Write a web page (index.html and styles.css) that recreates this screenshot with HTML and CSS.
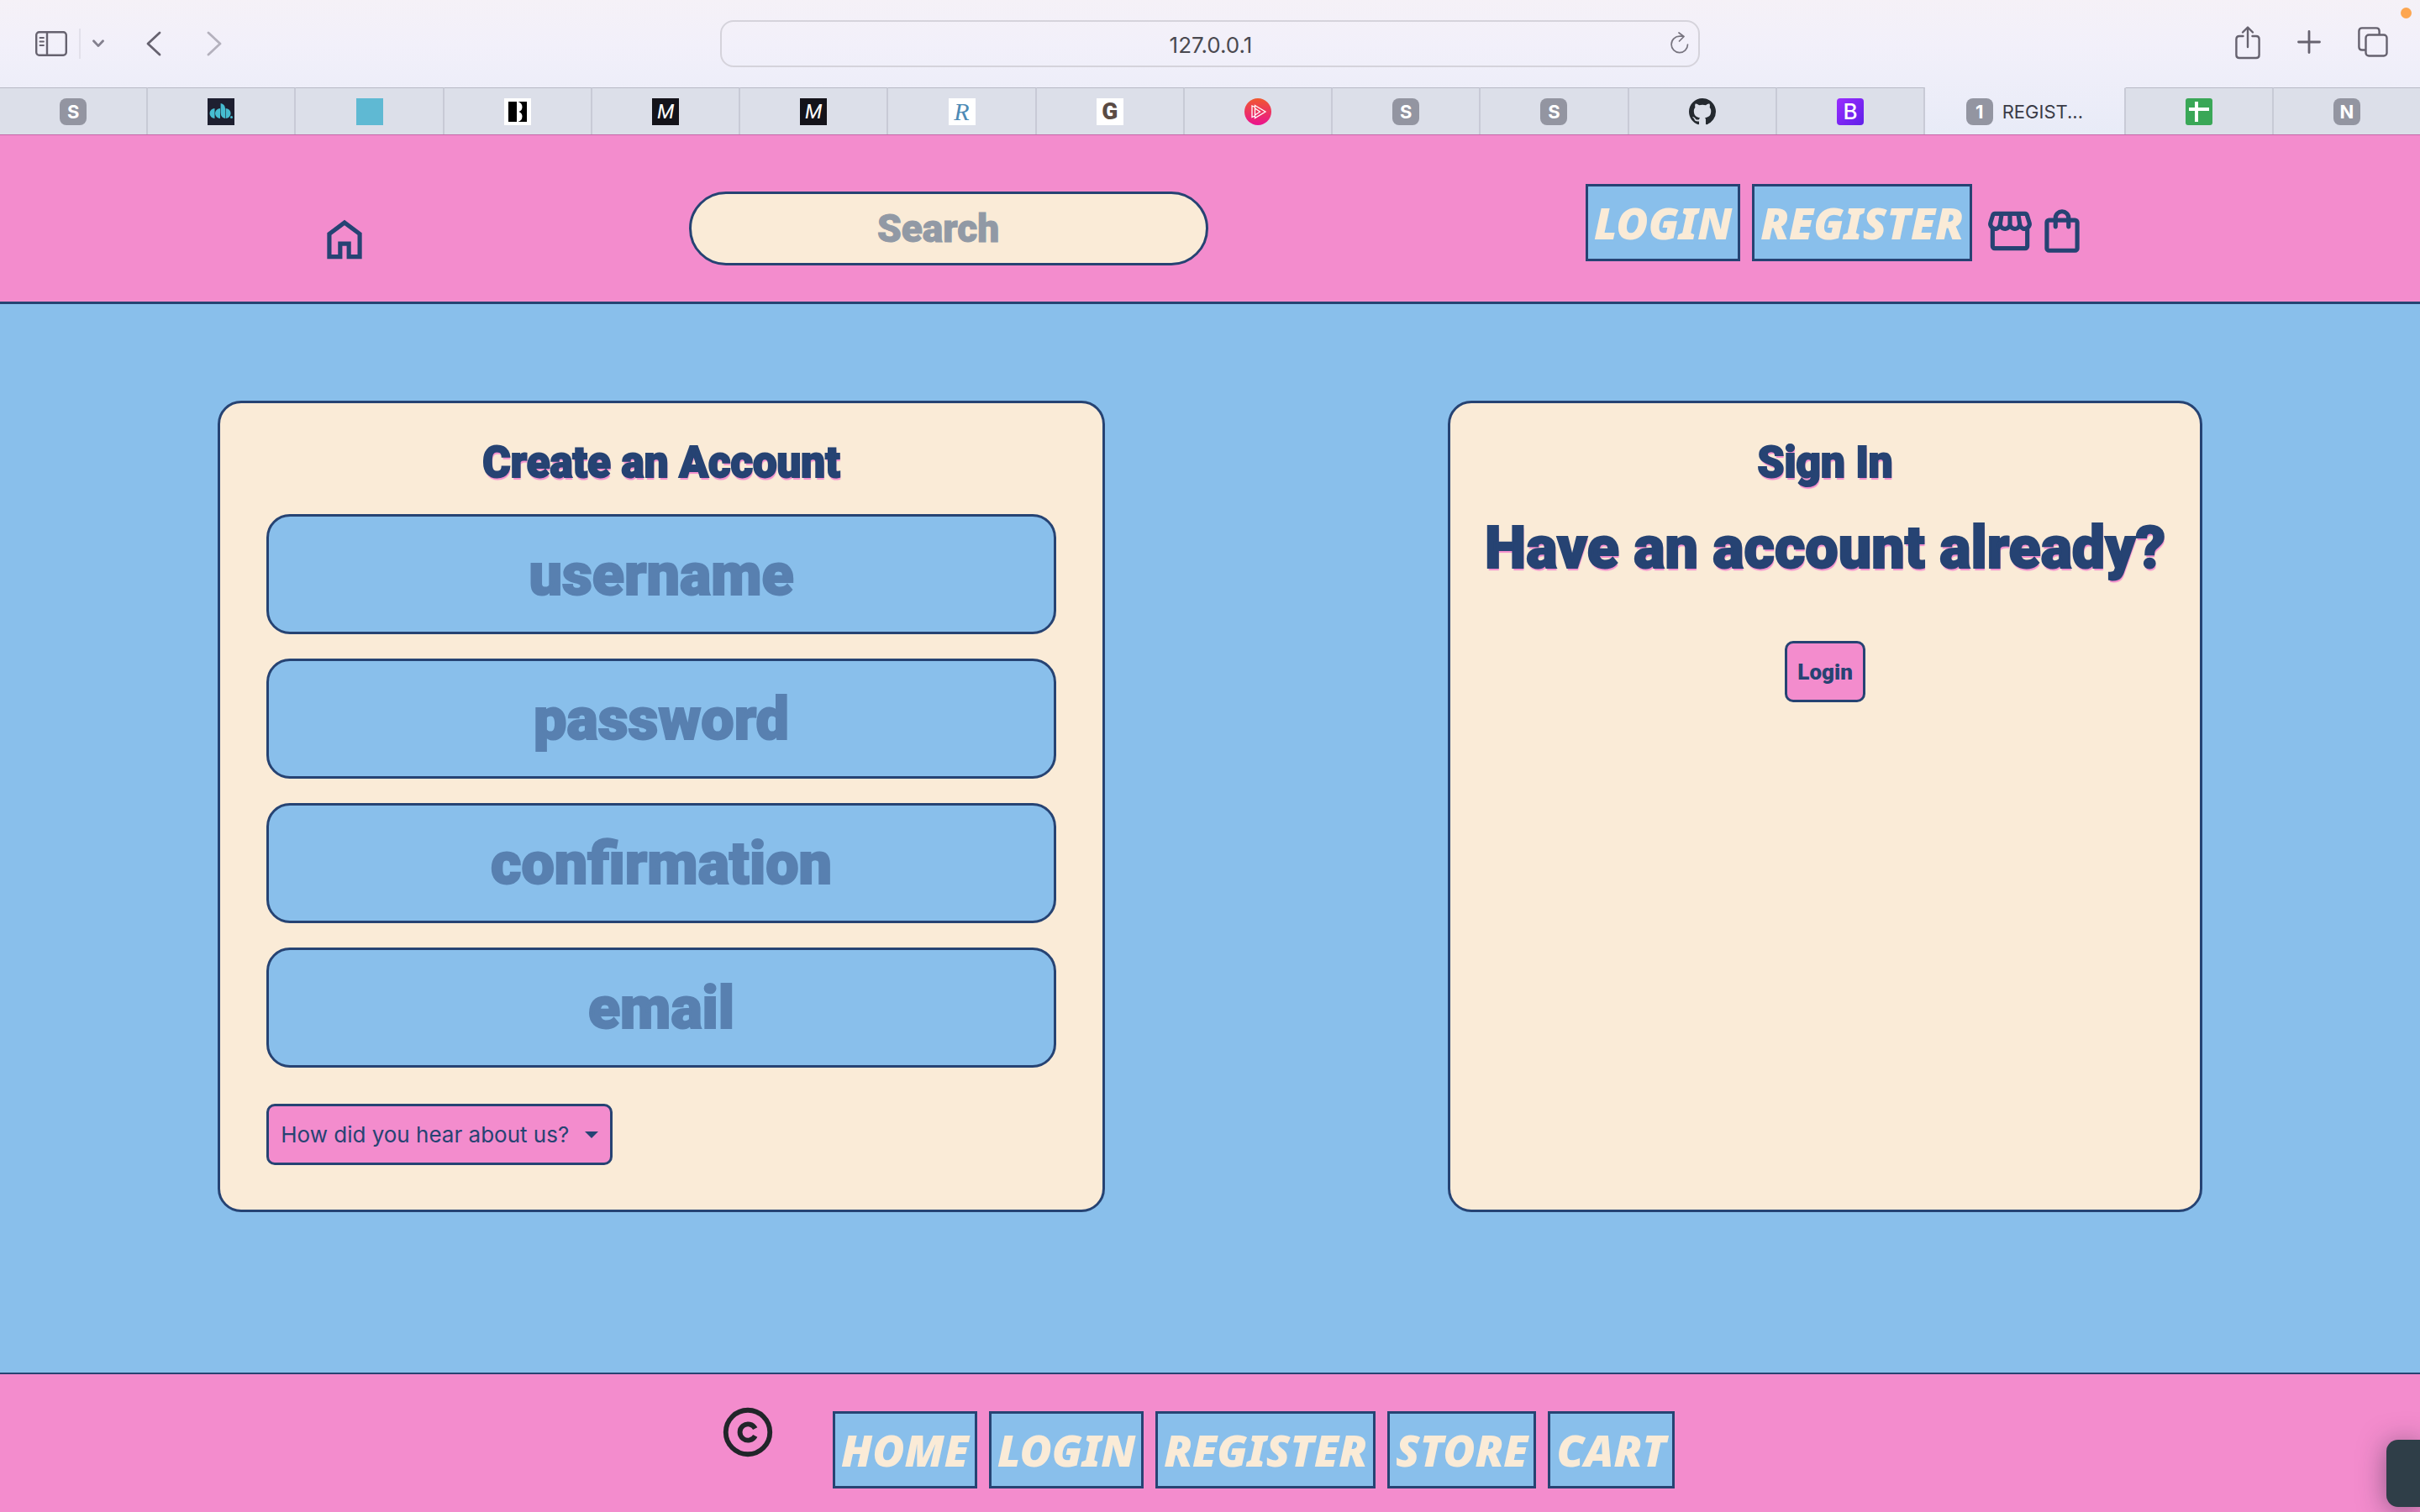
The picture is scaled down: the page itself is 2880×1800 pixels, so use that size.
FILE: index.html
```html
<!DOCTYPE html>
<html lang="en">
<head>
<meta charset="utf-8">
<meta name="viewport" content="width=device-width, initial-scale=1">
<title>REGISTER</title>
<link rel="stylesheet" href="styles.css">
</head>
<body>
<div class="browser">
  <div class="toolbar">
    <div class="toolbar-left">
      <button class="tool" aria-label="Sidebar"><svg width="38" height="30" viewBox="0 0 38 30" fill="none" stroke="currentColor"><rect x="1.2" y="1.2" width="35.6" height="27.6" rx="3.5" stroke-width="2.4"/><path d="M14 1v28" stroke-width="2.4"/><path d="M5.5 8h4.500M5.500 12.500h4.500M5.500 17h4.500" stroke-width="1.8" stroke-linecap="round"/></svg></button>
      <span class="divider"></span>
      <button class="tool muted" aria-label="Tab groups"><svg width="14" height="10" viewBox="0 0 14 10" fill="none" stroke="currentColor" stroke-width="2.8" stroke-linecap="round" stroke-linejoin="round"><path d="M1.500 1.800 7 7.600l5.500-5.800"/></svg></button>
      <button class="tool back" aria-label="Back"><svg width="18" height="30" viewBox="0 0 18 30" fill="none" stroke="currentColor" stroke-width="2.8" stroke-linecap="round" stroke-linejoin="round"><path d="M16 2 2 15l14 13"/></svg></button>
      <button class="tool forward" aria-label="Forward"><svg width="18" height="30" viewBox="0 0 18 30" fill="none" stroke="currentColor" stroke-width="2.8" stroke-linecap="round" stroke-linejoin="round"><path d="M2 2l14 13L2 28"/></svg></button>
    </div>
    <div class="address">
      <input class="address-input" type="text" aria-label="Address" value="127.0.0.1">
      <button class="reload" aria-label="Reload"><svg width="22" height="26" viewBox="0 0 22 26" fill="none" stroke="currentColor" stroke-width="1.700" stroke-linecap="round" stroke-linejoin="round"><path d="M20.500 15A9.700 9.700 0 1 1 11 5.200h4.500M10 1l6 4.500-5.500 5.500"/></svg></button>
    </div>
    <div class="toolbar-right">
      <button class="tool" aria-label="Share"><svg width="30" height="42" viewBox="0 0 30 42" fill="none" stroke="currentColor" stroke-width="2.400" stroke-linecap="round" stroke-linejoin="round"><path d="M9.500 14H5q-3.600 0-3.600 3.600v18.800Q1.400 40 5 40h20q3.600 0 3.600-3.600V17.600Q28.600 14 25 14h-4.500M15 27V4M9 9.500l6-6 6 6"/></svg></button>
      <button class="tool" aria-label="New tab"><svg width="28" height="28" viewBox="0 0 28 28" fill="none" stroke="currentColor" stroke-width="2.800" stroke-linecap="round"><path d="M14 1.500v25M1.500 14h25"/></svg></button>
      <button class="tool" aria-label="All tabs"><svg width="36" height="36" viewBox="0 0 36 36" fill="none" stroke="currentColor" stroke-width="2.400" stroke-linejoin="round"><rect x="9.500" y="9.500" width="25" height="25" rx="3.600"/><path d="M9 27.500H5q-3.600 0-3.600-3.600V5Q1.400 1.400 5 1.400h17q3.600 0 3.600 3.600v4"/></svg></button>
      <span class="dot"></span>
    </div>
  </div>
  <div class="tabs">
    <div class="tab"><span class="tile">S</span></div>
    <div class="tab"><svg class="favicon" viewBox="0 0 32 32"><rect width="32" height="32" fill="#1e1f30"/><g fill="#46bcd0"><path d="M8.500 12v12a6 6 0 0 1 0-12zM15 12v12a6 6 0 0 1 0-12zM15.600 6q5 1 5.400 6v12q-5.400-1-5.400-7zM21.600 12a6 6 0 0 1 0 12z"/><circle cx="28.500" cy="22.500" r="1.500"/></g></svg></div>
    <div class="tab"><svg class="favicon" viewBox="0 0 32 32"><rect width="32" height="32" fill="#5fb9d3"/></svg></div>
    <div class="tab"><svg class="favicon" viewBox="0 0 32 32"><rect width="32" height="32" fill="#fff"/><path fill="#000" d="M5 4h10v24H5zM16.500 4H27v24H16.500q5-1.500 5-6.500 0-4-4-5.500 4-1.500 4-5.500 0-5-5-6.500z"/></svg></div>
    <div class="tab"><span class="tile tile-black">M</span></div>
    <div class="tab"><span class="tile tile-black">M</span></div>
    <div class="tab"><span class="tile tile-script">R</span></div>
    <div class="tab"><span class="tile tile-brown">G</span></div>
    <div class="tab"><svg class="favicon" viewBox="0 0 32 32"><defs><linearGradient id="warm" x2="0" y2="1"><stop stop-color="#f0592f"/><stop offset="1" stop-color="#ea128f"/></linearGradient></defs><circle cx="16" cy="16" r="16" fill="url(#warm)"/><path d="M12.500 8.500 25 16l-12.500 7.500zM12.500 10.500 9 9v13.500l3.500-1.500M12.500 12l6 4-6 4" fill="none" stroke="#fff" stroke-width="1.300"/></svg></div>
    <div class="tab"><span class="tile">S</span></div>
    <div class="tab"><span class="tile">S</span></div>
    <div class="tab"><svg class="favicon" viewBox="0 0 16 16"><path fill="#24292f" d="M8 0C3.580 0 0 3.580 0 8c0 3.540 2.290 6.530 5.470 7.590.4.070.55-.17.55-.38 0-.19-.01-.82-.01-1.490-2.010.37-2.530-.49-2.690-.94-.09-.23-.48-.94-.82-1.130-.28-.15-.68-.52-.01-.53.63-.01 1.080.58 1.230.82.72 1.210 1.870.87 2.330.66.07-.52.28-.87.51-1.070-1.780-.2-3.640-.89-3.640-3.950 0-.87.31-1.590.82-2.150-.08-.2-.36-1.020.08-2.120 0 0 .67-.21 2.200.82.64-.18 1.320-.27 2-.27s1.360.09 2 .27c1.530-1.040 2.200-.82 2.200-.82.44 1.100.16 1.920.08 2.120.51.56.82 1.270.82 2.150 0 3.070-1.870 3.750-3.650 3.950.29.25.54.73.54 1.480 0 1.070-.01 1.930-.01 2.200 0 .21.15.46.55.38A8.010 8.010 0 0 0 16 8c0-4.420-3.580-8-8-8z"/></svg></div>
    <div class="tab"><span class="tile tile-purple">B</span></div>
    <div class="tab tab-active"><span class="tile">1</span><span>REGIST...</span></div>
    <div class="tab"><svg class="favicon" viewBox="0 0 32 32"><rect width="32" height="32" rx="3" fill="#3aa757"/><path d="M13 4v24M4 13h24" stroke="#fff" stroke-width="4"/></svg></div>
    <div class="tab"><span class="tile">N</span></div>
  </div>
</div>

<header class="header">
  <a class="home" href="#" aria-label="Home"><svg class="icon" viewBox="0 0 24 24"><path d="M6 19h3v-6h6v6h3v-9l-6-4.500L6 10v9Zm-2 2V9l8-6 8 6v12h-7v-6h-2v6H4Z"/></svg></a>
  <input class="search" type="search" placeholder="Search" aria-label="Search">
  <nav class="actions">
    <a class="tag" href="#">LOGIN</a>
    <a class="tag" href="#">REGISTER</a>
    <span class="shop-links">
      <a href="#" aria-label="Store"><svg class="icon" viewBox="0 0 24 24"><path d="M21 11.050V19q0 .825-.588 1.413T19 21H5q-.825 0-1.413-.588T3 19v-7.950q-.575-.525-.888-1.350T2.100 7.900l1.050-3.400q.2-.65.713-1.075T5.050 3h13.900q.675 0 1.175.413T20.850 4.500l1.050 3.400q.3.975-.013 1.775T21 11.050ZM14.200 10q.675 0 1.025-.463t.275-1.037L14.950 5H13v3.700q0 .525.35.913T14.200 10Zm-4.500 0q.575 0 .938-.387T11 8.700V5H9.050L8.500 8.500q-.1.600.263 1.050T9.700 10Zm-4.450 0q.45 0 .788-.325T6.450 8.850L7.050 5H5.050l-1 3.350q-.15.500.163 1.075T5.250 10Zm13.500 0q.725 0 1.050-.575t.15-1.075L18.900 5h-1.950l.6 3.850q.075.500.412.825T18.750 10ZM5 19h14v-7.050q-.125.050-.163.050h-.087q-.675 0-1.188-.225T16.550 11.050q-.45.450-1.025.700T14.300 12q-.675 0-1.262-.250T12 11.050q-.425.450-.988.700T9.800 12q-.75 0-1.363-.250T7.400 11.050q-.525.525-1.063.738T5.250 12H5.100q-.05 0-.1-.050V19Z"/></svg></a>
      <a href="#" aria-label="Cart"><svg class="icon" viewBox="0 0 24 24"><path d="M6 22q-.825 0-1.413-.588T4 20V8q0-.825.588-1.413T6 6h2q0-1.650 1.175-2.825T12 2q1.650 0 2.825 1.175T16 6h2q.825 0 1.413.588T20 8v12q0 .825-.588 1.413T18 22H6Zm0-2h12V8h-2v2q0 .425-.288.713T15 11q-.425 0-.713-.288T14 10V8h-4v2q0 .425-.288.713T9 11q-.425 0-.713-.288T8 10V8H6v12Zm4-14h4q0-.825-.588-1.413T12 4q-.825 0-1.413.588T10 6Z"/></svg></a>
    </span>
  </nav>
</header>

<main class="main">
  <form class="card card-register">
    <h2 class="card-title">Create an Account</h2>
    <div class="fields">
      <input class="field" type="text" placeholder="username" aria-label="username">
      <input class="field" type="password" placeholder="password" aria-label="password">
      <input class="field" type="password" placeholder="confirmation" aria-label="confirmation">
      <input class="field" type="email" placeholder="email" aria-label="email">
    </div>
    <div class="dropdown">
      <select class="dropdown-select" aria-label="How did you hear about us?"><option>How did you hear about us?</option></select>
      <svg class="caret" viewBox="0 0 16 8"><path d="M0 0h16L8 8z"/></svg>
    </div>
  </form>
  <section class="card card-login">
    <h2 class="card-title">Sign In</h2>
    <h1 class="question">Have an account already?</h1>
    <button class="login-button">Login</button>
  </section>
</main>

<footer class="footer">
  <svg class="copyright" viewBox="0 0 24 24" fill="none" stroke="currentColor" stroke-width="2" role="img" aria-label="Copyright"><circle cx="12" cy="12" r="9"/><path d="M15 10.500A3.300 3.300 0 1 0 15 13.500"/></svg>
  <nav class="footer-nav">
    <a class="tag" href="#">HOME</a>
    <a class="tag" href="#">LOGIN</a>
    <a class="tag" href="#">REGISTER</a>
    <a class="tag" href="#">STORE</a>
    <a class="tag" href="#">CART</a>
  </nav>
</footer>
<div class="drawer"></div>
</body>
</html>
```
FILE: styles.css
```css
:root {
  --pink: #f38ccd;
  --blue: #89bfeb;
  --cream: #faebd7;
  --navy: #264373;
  --display: Roboto, sans-serif;
  --ui: Inter, sans-serif;
}

* { box-sizing: border-box; }

body {
  margin: 0;
  min-height: 100vh;
  display: flex;
  flex-direction: column;
  overflow-x: hidden;
  background: var(--blue);
  color: var(--navy);
  font-family: var(--ui);
}

button { padding: 0; border: 0; background: none; color: inherit; font: inherit; }
svg { display: block; }
a { color: inherit; text-decoration: none; }

/* Browser chrome */
.browser { background: linear-gradient(#f5f1f7, #f2f0fa 34%, #e8ebf7); border-bottom: 1px solid #c667a8; }
.toolbar {
  height: 104px;
  display: grid;
  grid-template-columns: 1fr 40.5% 1fr;
  align-items: center;
  color: #66626f;
}
.toolbar-left { display: flex; align-items: center; padding-left: 42px; }
.divider { width: 2px; height: 36px; margin: 0 14px; background: #e2e0ea; }
.muted { color: #83808e; }
.back { margin-left: 50px; }
.forward { margin-left: 54px; color: #b4b1bd; }
.address { position: relative; }
.address-input {
  display: block;
  width: 100%;
  height: 56px;
  padding: 2px 0 0 2px;
  border: 2px solid #d5d3db;
  border-radius: 16px;
  background: none;
  color: #4a4950;
  font: 26px var(--ui);
  text-align: center;
}
.reload { position: absolute; right: 13px; top: 14px; color: #77747f; }
.toolbar-right { position: relative; display: flex; align-items: center; justify-content: flex-end; gap: 44px; padding: 0 38px 4px 0; }
.dot { position: absolute; right: 10px; top: -20px; width: 13px; height: 13px; border-radius: 50%; background: #fda650; }

.tabs { display: flex; height: 56px; }
.tab {
  flex: 176 1 0;
  display: flex;
  align-items: center;
  justify-content: center;
  gap: 11px;
  border-top: 1px solid #b9bac6;
  border-right: 2px solid #c8cad6;
  background: #dcdfe9;
  color: #3a3b47;
  font-size: 22px;
}
.tab:last-child { border-right: 0; }
.tab-active { flex-grow: 239; border-top-color: transparent; background: none; }
.favicon { width: 32px; height: 32px; }
.tile {
  width: 32px;
  height: 32px;
  border-radius: 8px;
  background: #9395a1;
  color: #fff;
  font: 700 22px/32px var(--ui);
  text-align: center;
}
.tile-black { border-radius: 0; background: #14131a; font: italic 400 24px/32px var(--display); }
.tile-script { border-radius: 0; background: #fff; color: #4d8ab5; font: italic 400 30px/32px "Liberation Serif", serif; }
.tile-brown { border-radius: 0; background: #fff; color: #5a4b44; font: 900 28px/32px var(--display); }
.tile-purple { border-radius: 4px; background: linear-gradient(135deg, #9a2cff, #5f20e8); font: 500 26px/32px var(--ui); }

/* Site header */
.header {
  display: grid;
  grid-template-columns: 820fr 618fr 449fr 993fr;
  align-items: end;
  padding: 58px 0 43px;
  border-bottom: 3px solid var(--navy);
  background: var(--pink);
}
.icon { width: 62px; height: 62px; fill: var(--navy); }
.home { justify-self: center; }
.search {
  width: 100%;
  height: 88px;
  border: 3px solid var(--navy);
  border-radius: 44px;
  background: var(--cream);
  color: var(--navy);
  font: 900 46px var(--display);
  text-align: center;
  -webkit-text-stroke: 1px;
}
.search::placeholder { color: #9199a5; opacity: 1; }
.actions { grid-column: 4; display: flex; align-items: end; gap: 14px; padding-bottom: 5px; }
.shop-links { display: flex; padding-bottom: 5px; }
.tag {
  padding: 0 7px;
  border: 3px solid var(--navy);
  background: var(--blue);
  color: var(--cream);
  font: italic 900 52px/86px "Noto Sans", sans-serif;
}

/* Cards */
.main {
  flex: 1;
  display: flex;
  align-items: stretch;
  justify-content: space-between;
  padding: 115px 9% 191px;
}
.card { padding: 40px 55px 53px; border: 3px solid var(--navy); border-radius: 28px; background: var(--cream); }
.card-register { width: 44.7%; }
.card-login { width: 38%; padding-inline: 20px; text-align: center; }
.card-title, .question {
  margin: 0;
  font-family: var(--display);
  font-weight: 900;
  text-align: center;
  text-shadow: 1px 3px 1px var(--pink);
  -webkit-text-stroke: 2px;
}
.card-title { font-size: 51px; line-height: 62px; }
.question { margin-top: 28px; font-size: 70px; line-height: 84px; }
.fields { display: grid; gap: 29px; margin-top: 30px; }
.field {
  width: 100%;
  height: 143px;
  border: 3px solid var(--navy);
  border-radius: 28px;
  background: var(--blue);
  color: var(--navy);
  font: 900 70px var(--display);
  text-align: center;
  -webkit-text-stroke: 2px;
}
.field::placeholder { color: #5880b0; opacity: 1; }
.dropdown { position: relative; width: max-content; margin-top: 43px; }
.dropdown-select {
  appearance: none;
  height: 73px;
  padding: 0 48px 0 14px;
  border: 3px solid var(--navy);
  border-radius: 10px;
  background: var(--pink);
  color: var(--navy);
  font: 26px var(--ui);
}
.caret { position: absolute; right: 17px; top: 33px; width: 16px; height: 8px; fill: var(--navy); }
.login-button {
  height: 73px;
  margin-top: 69px;
  padding: 0 12px;
  border: 3px solid var(--navy);
  border-radius: 10px;
  background: var(--pink);
  font: 900 26px var(--display);
}

/* Footer */
.footer {
  display: flex;
  align-items: start;
  justify-content: center;
  gap: 66px;
  padding: 34px 32px 28px 0;
  border-top: 2px solid var(--navy);
  background: var(--pink);
}
.copyright { width: 70px; height: 70px; color: #212529; }
.footer-nav { display: flex; gap: 14px; padding-top: 10px; }
.drawer {
  position: fixed;
  right: 0;
  bottom: 6px;
  width: 40px;
  height: 80px;
  border-radius: 14px 0 0 14px;
  background: #2f3e48;
  box-shadow: 0 4px 32px rgba(40, 40, 60, .5);
}
```
